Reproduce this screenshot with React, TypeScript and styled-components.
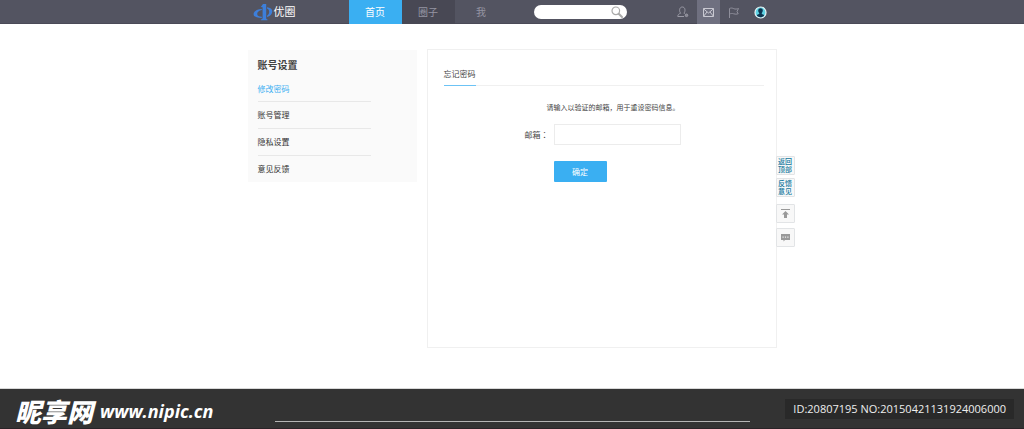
import React from 'react';
import styled, { createGlobalStyle } from 'styled-components';

const GlobalStyle = createGlobalStyle`
  *, *::before, *::after { box-sizing: border-box; }
  html, body, #root { height: 100%; }
  body {
    margin: 0;
    background: #fff;
    color: #444;
    font-family: "Noto Sans", "Noto Sans CJK SC", sans-serif;
    font-size: 8px;
    line-height: 10px;
  }
  a { color: inherit; text-decoration: none; }
  button, input { font: inherit; border: 0; padding: 0; margin: 0; }
  h1, h2, p, ul { margin: 0; padding: 0; }
  ul { list-style: none; }
  svg { display: block; }
`;

const Page = styled.div`
  display: flex;
  flex-direction: column;
  min-height: 100%;
`;

const Container = styled.div`
  width: 100%;
  max-width: 529px;
  margin: 0 auto;
`;

const Header = styled.header`
  background: #535461;
  border-bottom: 1px solid #4a4a57;
`;

const HeaderRow = styled(Container)`
  display: flex;
  align-items: stretch;
  height: 23px;
`;

const Logo = styled.a`
  display: flex;
  align-items: center;
  gap: 1px;
  width: 101px;
  padding-left: 5px;
  color: #fff;
  font-size: 11px;
`;

const Nav = styled.nav`
  display: flex;
`;

const NavLink = styled.a<{ $tone?: 'active' | 'dark' }>`
  display: flex;
  align-items: center;
  justify-content: center;
  width: 53px;
  height: 24px;
  font-size: 10px;
  color: ${(p) => (p.$tone === 'active' ? '#fff' : '#9595a3')};
  background: ${(p) =>
    p.$tone === 'active' ? '#3aaff2' : p.$tone === 'dark' ? '#484854' : 'transparent'};
`;

const Search = styled.form`
  display: flex;
  align-items: center;
  align-self: center;
  width: 93px;
  height: 14px;
  margin: 1px auto 0 26px;
  padding: 0 4px 0 7px;
  border-radius: 7px;
  background: #fff;
`;

const SearchInput = styled.input`
  flex: 1;
  min-width: 0;
  height: 12px;
  background: transparent;
  outline: none;
`;

const IconButton = styled.button<{ $active?: boolean }>`
  display: flex;
  align-items: center;
  justify-content: center;
  background: transparent;
  cursor: pointer;
`;

const Actions = styled.div`
  display: flex;
  margin-right: 3px;
`;

const Action = styled(IconButton)`
  width: ${(p) => (p.$active ? 23 : 27)}px;
  height: 24px;
  background: ${(p) => (p.$active ? '#6f7080' : 'transparent')};
`;

const Main = styled(Container).attrs({ as: 'main' })`
  position: relative;
  display: flex;
  align-items: flex-start;
  gap: 10px;
  padding: 25px 0 40px;
`;

const Sidebar = styled.aside`
  width: 169px;
  margin-top: 1px;
  padding: 10px 46px 0 10px;
  background: #fafafa;
`;

const SidebarTitle = styled.h2`
  color: #444;
  font-size: 10px;
  font-weight: 700;
`;

const MenuItem = styled.li`
  height: 27px;
  padding-top: 8px;
  border-top: 1px solid #e8e8e8;
  &:first-child { border-top: 0; height: 31px; padding-top: 14px; }
`;

const MenuLink = styled.a<{ $active?: boolean }>`
  display: block;
  color: ${(p) => (p.$active ? '#3aaff2' : '#333')};
`;

const Panel = styled.section`
  flex: 1;
  min-height: 299px;
  padding: 19px 12px 0 16px;
  border: 1px solid #f0f0f0;
`;

const PanelHead = styled.div`
  display: flex;
  border-bottom: 1px solid #f0f0f0;
`;

const PanelTitle = styled.h1`
  margin-bottom: -1px;
  padding-bottom: 6px;
  border-bottom: 1px solid #6cc3f5;
  color: #444;
  font-size: 8px;
  font-weight: 400;
`;

const Form = styled.form`
  display: grid;
  grid-template-columns: 110px 127px;
  align-items: center;
  padding-top: 17px;
`;

const Hint = styled.p`
  grid-column: 1 / -1;
  padding-left: 103px;
  margin-bottom: 11px;
  font-size: 7px;
  white-space: nowrap;
`;

const Label = styled.label`
  padding-right: 5px;
  font-family: "Noto Sans CJK TC", sans-serif;
  text-align: right;
`;

const EmailInput = styled.input`
  width: 100%;
  height: 21px;
  padding: 0 6px;
  border: 1px solid #ececec;
  background: #fff;
`;

const Submit = styled.button`
  grid-column: 2;
  width: 53px;
  height: 21px;
  margin-top: 16px;
  border-radius: 1px;
  background: #3aaff2;
  color: #fff;
  cursor: pointer;
`;

const Tools = styled.div`
  position: absolute;
  top: 132px;
  left: calc(100% - 1px);
  display: grid;
  gap: 7px;
`;

const ToolGroup = styled.div<{ $gap: number }>`
  display: grid;
  gap: ${(p) => p.$gap}px;
`;

const Tool = styled.button`
  display: flex;
  align-items: center;
  justify-content: center;
  width: 19px;
  height: 19px;
  border: 1px solid #e2e4e6;
  border-radius: 1px;
  background: #f8f8f8;
  color: #14799e;
  font-size: 7px;
  font-weight: 500;
  line-height: 8px;
  cursor: pointer;
`;

const Footer = styled.footer`
  display: grid;
  grid-template-columns: 1fr 475px 1fr;
  height: 41px;
  margin-top: auto;
  border-top: 1px solid #d8d8d8;
  border-bottom: 1px solid #2a2327;
  background: #333;
`;

const Brand = styled.div`
  display: flex;
  align-items: center;
  gap: 7px;
  padding: 4px 0 0 15px;
  color: #fff;
  font-style: italic;
  font-weight: 700;
  white-space: nowrap;
`;

const BrandName = styled.span`
  font-family: "Noto Sans CJK SC", sans-serif;
  font-size: 26px;
  font-weight: 900;
  line-height: 28px;
`;

const BrandUrl = styled.span`
  font-family: "Open Sans", sans-serif;
  font-size: 18px;
  line-height: 20px;
`;

const Rule = styled.hr`
  align-self: end;
  width: 100%;
  height: 1px;
  margin: 0 0 6px;
  border: 0;
  background: #b5b5b5;
`;

const Serial = styled.p`
  align-self: start;
  justify-self: end;
  margin: 10px 10px 0 0;
  padding: 0 8px;
  background: #292929;
  color: #eee;
  font-family: "Open Sans", sans-serif;
  font-size: 11px;
  line-height: 20px;
  white-space: nowrap;
`;

const LogoMark = () => (
  <svg width="20" height="18" viewBox="0 0 20 18" fill="#3d7fda" aria-hidden="true">
    <path d="M10 1h3.200v14c0 1 .5 1.300 1.300 1.500v.7H7.800v-.7c1.300-.2 1.800-.6 1.800-1.800V4.200L7.800 4z" />
    <path d="M8.800 6C4 6.200.6 8.300.6 11.200c0 2.400 3.200 3.900 8.200 3.900v-1.400c-3-.1-4.600-1.100-4.600-2.800 0-2 1.800-3.400 4.600-3.900z" />
    <path d="M14 4.200c3.300.3 5.300 1.800 5.300 4.100 0 3-2.300 5-5.300 5.800v-1.400c1.500-.8 2.200-2.200 2.200-3.900 0-1.800-.8-2.800-2.200-3.400z" />
  </svg>
);

const SearchIcon = () => (
  <svg width="12" height="12" viewBox="0 0 12 12" fill="none" stroke="#aaa" aria-hidden="true">
    <circle cx="4.800" cy="4.800" r="3.800" strokeWidth="1.200" />
    <path d="M7.700 7.700l3.300 3.300" strokeWidth="2" strokeLinecap="round" />
  </svg>
);

const UserIcon = () => (
  <svg width="12" height="12" viewBox="0 0 12 12" fill="none" stroke="#9a9aa5" aria-hidden="true">
    <path d="M7 10.500H.8c0-1.900 1-2.600 2.900-3.300C2.600 6 2.500 4.800 2.700 3.300 3 1.800 4 1 5.300 1s2.400.8 2.600 2.300c.2 1.500 0 2.700-1 3.900l.8.400" />
    <circle cx="9.500" cy="9.300" r="1.300" fill="#85858f" />
  </svg>
);

const MailIcon = () => (
  <svg width="11" height="9" viewBox="0 0 11 9" fill="none" stroke="#c9c9d2" aria-hidden="true">
    <path d="M.5.500h10v8H.5zM.5.800l5 4.200 5-4.200M.5 8.300L4 4M10.500 8.300L7 4" />
  </svg>
);

const FlagIcon = () => (
  <svg width="11" height="11" viewBox="0 0 11 11" fill="none" stroke="#8f8f9b" aria-hidden="true">
    <path d="M1.500 11V1.500M1.500 1.500c1.800-.8 3-.5 4.300.2 1.500.6 3 .4 4.700-.2L9 4.500l1.200 2.300c-1.700.5-3 .5-4.500 0-1.500-.5-2.700-.4-4.200.2" />
  </svg>
);

const AvatarIcon = () => (
  <svg width="13" height="13" viewBox="0 0 13 13" aria-hidden="true">
    <circle cx="6.500" cy="6.500" r="5.500" fill="#5fd3e4" stroke="#e8f4f6" strokeWidth="1.200" />
    <path d="M6.500 2.300c1.600 0 2.400 1 2.300 2.500-.1 1-.5 1.700-1 2.200v1c1.200.3 2 .7 2.400 1.500-1 1.100-2.200 1.700-3.700 1.700s-2.700-.6-3.700-1.700c.4-.8 1.200-1.200 2.400-1.500V7c-.6-.5-1-1.200-1-2.200 0-1.500.8-2.500 2.300-2.500z" fill="#0c3550" />
  </svg>
);

const TopIcon = () => (
  <svg width="9" height="11" viewBox="0 0 9 11" fill="#999" aria-hidden="true">
    <path d="M0 1h9v1H0zM4.500 3L8 6.500H6V10H3V6.500H1z" />
  </svg>
);

const ChatIcon = () => (
  <svg width="9" height="9" viewBox="0 0 9 9" aria-hidden="true">
    <path d="M0 1h9v6H4L2.500 8.500V7H0z" fill="#999" />
    <path d="M1.500 3.500h1.200v1.200H1.500zM3.900 3.500h1.200v1.200H3.900zM6.300 3.500h1.200v1.200H6.300z" fill="#eee" />
  </svg>
);

const menu = ['修改密码', '账号管理', '隐私设置', '意见反馈'];

export default function App() {
  return (
    <Page>
      <GlobalStyle />
      <Header>
        <HeaderRow>
          <Logo href="#"><LogoMark />优圈</Logo>
          <Nav>
            <NavLink href="#" $tone="active">首页</NavLink>
            <NavLink href="#" $tone="dark">圈子</NavLink>
            <NavLink href="#">我</NavLink>
          </Nav>
          <Search role="search" onSubmit={(e) => e.preventDefault()}>
            <SearchInput type="search" aria-label="搜索" />
            <IconButton type="submit" aria-label="搜索"><SearchIcon /></IconButton>
          </Search>
          <Actions>
            <Action type="button" aria-label="好友"><UserIcon /></Action>
            <Action type="button" aria-label="消息" $active><MailIcon /></Action>
            <Action type="button" aria-label="标记"><FlagIcon /></Action>
            <Action type="button" aria-label="账号"><AvatarIcon /></Action>
          </Actions>
        </HeaderRow>
      </Header>

      <Main>
        <Sidebar>
          <SidebarTitle>账号设置</SidebarTitle>
          <ul>
            {menu.map((name, i) => (
              <MenuItem key={name}>
                <MenuLink href="#" $active={i === 0}>{name}</MenuLink>
              </MenuItem>
            ))}
          </ul>
        </Sidebar>
        <Panel>
          <PanelHead><PanelTitle>忘记密码</PanelTitle></PanelHead>
          <Form onSubmit={(e) => e.preventDefault()}>
            <Hint>请输入以验证的邮箱，用于重设密码信息。</Hint>
            <Label htmlFor="email">邮箱：</Label>
            <EmailInput id="email" type="email" />
            <Submit type="submit">确定</Submit>
          </Form>
        </Panel>
        <Tools>
          <ToolGroup $gap={3}>
            <Tool type="button">返回<br />顶部</Tool>
            <Tool type="button">反馈<br />意见</Tool>
          </ToolGroup>
          <ToolGroup $gap={5}>
            <Tool type="button" aria-label="返回顶部"><TopIcon /></Tool>
            <Tool type="button" aria-label="留言"><ChatIcon /></Tool>
          </ToolGroup>
        </Tools>
      </Main>

      <Footer>
        <Brand>
          <BrandName>昵享网</BrandName>
          <BrandUrl>www.nipic.cn</BrandUrl>
        </Brand>
        <Rule />
        <Serial>ID:20807195 NO:20150421131924006000</Serial>
      </Footer>
    </Page>
  );
}
